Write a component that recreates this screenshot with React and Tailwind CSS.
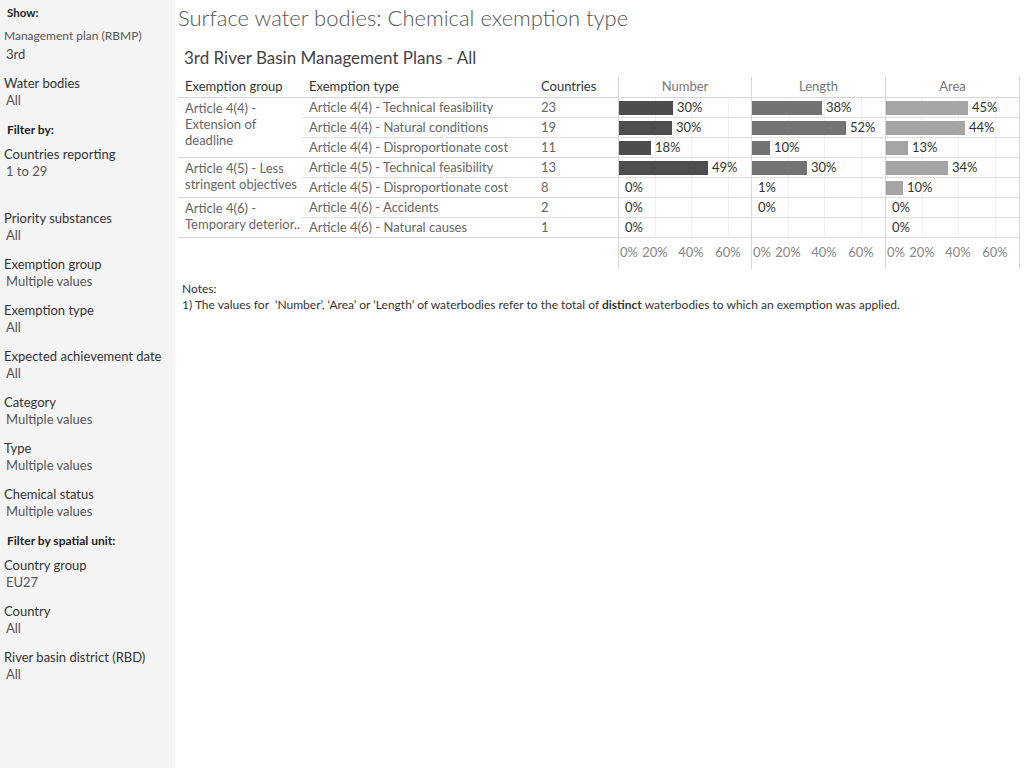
import React from 'react'

const filters = [
  { label: 'Water bodies', value: 'All' },
  { heading: 'Filter by:' },
  { label: 'Countries reporting', value: '1 to 29', gap: 'mb-[31px]' },
  { label: 'Priority substances', value: 'All' },
  { label: 'Exemption group', value: 'Multiple values' },
  { label: 'Exemption type', value: 'All' },
  { label: 'Expected achievement date', value: 'All' },
  { label: 'Category', value: 'Multiple values' },
  { label: 'Type', value: 'Multiple values' },
  { label: 'Chemical status', value: 'Multiple values' },
  { heading: 'Filter by spatial unit:' },
  { label: 'Country group', value: 'EU27' },
  { label: 'Country', value: 'All' },
  { label: 'River basin district (RBD)', value: 'All' },
]

// bar widths in px, label text; null = no mark
const rows = [
  { type: 'Article 4(4) - Technical feasibility', countries: 23, n: [54, '30%'], l: [70, '38%'], a: [82, '45%'] },
  { type: 'Article 4(4) - Natural conditions', countries: 19, n: [53, '30%'], l: [94, '52%'], a: [79, '44%'] },
  { type: 'Article 4(4) - Disproportionate cost', countries: 11, n: [32, '18%'], l: [18, '10%'], a: [22, '13%'] },
  { type: 'Article 4(5) - Technical feasibility', countries: 13, n: [89, '49%'], l: [55, '30%'], a: [62, '34%'] },
  { type: 'Article 4(5) - Disproportionate cost', countries: 8, n: [0, '0%'], l: [1, '1%'], a: [17, '10%'] },
  { type: 'Article 4(6) - Accidents', countries: 2, n: [0, '0%'], l: [0, '0%'], a: [0, '0%'] },
  { type: 'Article 4(6) - Natural causes', countries: 1, n: [0, '0%'], l: null, a: [0, '0%'] },
]

const groups = [
  { lines: ['Article 4(4) -', 'Extension of', 'deadline'], span: 'row-span-3', start: 'row-start-2' },
  { lines: ['Article 4(5) - Less', 'stringent objectives'], span: 'row-span-2', start: 'row-start-5' },
  { lines: ['Article 4(6) -', 'Temporary deterior..'], span: 'row-span-2', start: 'row-start-7' },
]

function Gridlines() {
  return (
    <>
      <div className="absolute top-0 bottom-0 left-[36px] w-px bg-[#f0f0f0]" />
      <div className="absolute top-0 bottom-0 left-[72px] w-px bg-[#f0f0f0]" />
      <div className="absolute top-0 bottom-0 left-[109px] w-px bg-[#f0f0f0]" />
    </>
  )
}

function BarCell({ mark, color }) {
  return (
    <div className="relative border-b border-[#e0e0e0] border-r border-r-[#d6d6d6] flex items-center">
      <Gridlines />
      {mark && (
        <div className="relative flex items-center h-full">
          {mark[0] > 1 && <div className={`h-[14px] ${color}`} style={{ width: mark[0] }} />}
          <span className={`text-[#333] ${mark[0] > 1 ? 'ml-[4px]' : 'ml-[6px]'}`}>{mark[1]}</span>
        </div>
      )}
    </div>
  )
}

function AxisCell() {
  return (
    <div className="relative h-[31px] border-r border-[#d6d6d6] text-[#888] leading-[16px]">
      <span className="absolute left-[1px] top-[6px]">0%</span>
      <span className="absolute left-[36px] top-[6px] -translate-x-1/2">20%</span>
      <span className="absolute left-[72px] top-[6px] -translate-x-1/2">40%</span>
      <span className="absolute left-[109px] top-[6px] -translate-x-1/2">60%</span>
    </div>
  )
}

export default function App() {
  return (
    <div className="flex min-h-[768px] bg-white font-['Lato','Liberation_Sans',sans-serif]">
      {/* Filter sidebar */}
      <aside className="w-[175px] shrink-0 bg-[#f4f4f4] pt-[5px] pl-[4px]">
        <p className="pl-[3px] text-[11.5px] font-bold text-[#222] leading-[16px]">Show:</p>
        <p className="mt-[7px] text-[12px] text-[#555] leading-[16px]">Management plan (RBMP)</p>
        <p className="pl-[2px] mt-[2px] text-[13px] text-[#444] leading-[16px] mb-[13px]">3rd</p>
        {filters.map((f, i) =>
          f.heading ? (
            <p key={i} className="pl-[3px] pt-[1px] text-[12px] font-bold text-[#222] leading-[16px] mb-[8px]">{f.heading}</p>
          ) : (
            <div key={i} className={f.gap || 'mb-[13px]'}>
              <p className="text-[13px] text-[#333] leading-[16px]">{f.label}</p>
              <p className="pl-[2px] mt-[1px] text-[13px] text-[#555] leading-[16px]">{f.value}</p>
            </div>
          )
        )}
      </aside>

      {/* Main sheet */}
      <main className="flex-1 pl-[3px] pt-[5px]">
        <h1 className="text-[22px] font-light text-[#555] leading-[26px]">Surface water bodies: Chemical exemption type</h1>
        <h2 className="pl-[6px] mt-[16px] text-[17px] text-[#444] leading-[22px]">3rd River Basin Management Plans - All</h2>

        <div className="mt-[8px] grid grid-cols-[124px_233px_84px_133px_134px_134px] grid-rows-[21px_repeat(7,20px)_31px] text-[13px] text-[#666]">
          {/* header */}
          <div className="pl-[7px] flex items-center text-[#333] border-b border-[#d6d6d6]">Exemption group</div>
          <div className="pl-[7px] flex items-center text-[#333] border-b border-[#d6d6d6]">Exemption type</div>
          <div className="pl-[6px] flex items-center text-[#333] border-b border-[#d6d6d6] border-r">Countries</div>
          <div className="flex items-center justify-center text-[#777] border-b border-r border-[#d6d6d6]">Number</div>
          <div className="flex items-center justify-center text-[#777] border-b border-r border-[#d6d6d6]">Length</div>
          <div className="flex items-center justify-center text-[#777] border-b border-r border-[#d6d6d6]">Area</div>

          {groups.map((g, i) => (
            <div key={i} className={`col-start-1 ${g.start} ${g.span} pl-[7px] pt-[2px] leading-[16px] border-b border-[#d6d6d6]`}>
              {g.lines.map((l) => (
                <div key={l} className="whitespace-nowrap">{l}</div>
              ))}
            </div>
          ))}

          {rows.map((r, i) => (
            <React.Fragment key={r.type}>
              <div className={`col-start-2 pl-[7px] flex items-center border-b ${[2, 4, 6].includes(i) ? 'border-[#d6d6d6]' : 'border-[#e0e0e0]'}`}>{r.type}</div>
              <div className={`pl-[6px] flex items-center border-b border-r border-r-[#d6d6d6] ${[2, 4, 6].includes(i) ? 'border-b-[#d6d6d6]' : 'border-b-[#e0e0e0]'}`}>{r.countries}</div>
              <BarCell mark={r.n} color="bg-[#4d4d4d]" />
              <BarCell mark={r.l} color="bg-[#737373]" />
              <BarCell mark={r.a} color="bg-[#a5a5a5]" />
            </React.Fragment>
          ))}

          {/* axis */}
          <div className="col-start-3 border-r border-[#d6d6d6]" />
          <AxisCell />
          <AxisCell />
          <AxisCell />
        </div>

        <div className="mt-[12px] pl-[4px] text-[12px] text-[#333] leading-[16px]">
          <p>Notes:</p>
          <p>
            1) The values for &nbsp;‘Number’, ‘Area’ or ‘Length’ of waterbodies refer to the total of <b className="font-bold">distinct</b> waterbodies to which an exemption was applied.
          </p>
        </div>
      </main>
    </div>
  )
}
